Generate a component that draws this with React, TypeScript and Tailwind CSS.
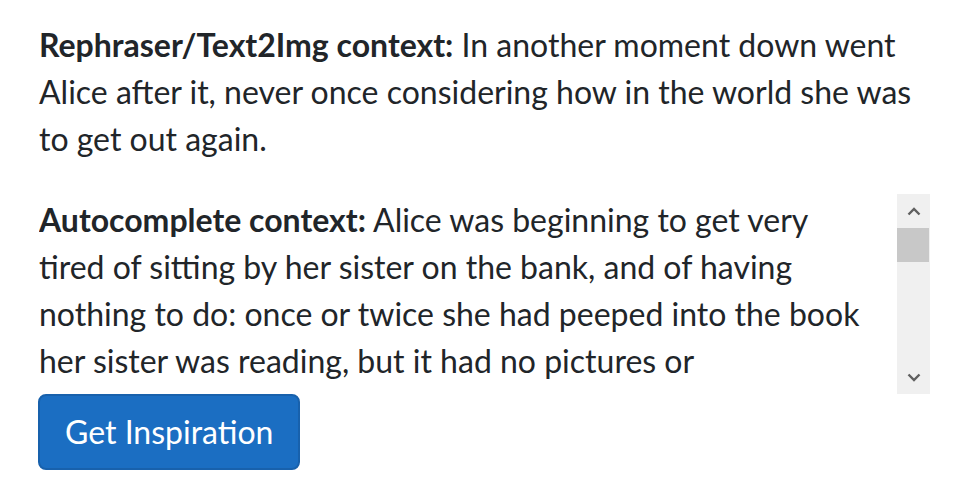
export default function App() {
  return (
    <div className="pl-[39px] pr-[24px] pt-[21px] text-[32px] leading-[47px] text-[#212529] font-['Lato','Liberation_Sans',sans-serif]">
      <p className="mb-[32px]">
        <b>Rephraser/Text2Img context:</b> In another moment down went
        <br />
        Alice after it, never once considering how in the world she was
        <br />
        to get out again.
      </p>

      <div className="flex h-[200px]">
        <div className="flex-1 overflow-hidden pt-[2px] whitespace-nowrap">
          <b>Autocomplete context:</b> Alice was beginning to get very
          <br />
          tired of sitting by her sister on the bank, and of having
          <br />
          nothing to do: once or twice she had peeped into the book
          <br />
          her sister was reading, but it had no pictures or
        </div>

        {/* fake scrollbar */}
        <div className="w-[33px] bg-[#f0f0f0] flex flex-col">
          <div className="h-[34px] flex items-center justify-center">
            <svg width="14" height="9" viewBox="0 0 14 9">
              <path d="M1.5 7.5 L7 2 L12.5 7.5" fill="none" stroke="#606060" strokeWidth="2.4" />
            </svg>
          </div>
          <div className="h-[34px] bg-[#c8c8c8] mr-[1px]" />
          <div className="flex-1" />
          <div className="h-[34px] flex items-center justify-center">
            <svg width="14" height="9" viewBox="0 0 14 9">
              <path d="M1.5 1.5 L7 7 L12.5 1.5" fill="none" stroke="#606060" strokeWidth="2.4" />
            </svg>
          </div>
        </div>
      </div>

      <div className="flex">
        <button className="px-[25px] py-[13px] text-white bg-[#1b6ec2] border-2 border-[#1861ac] rounded-[8px] leading-[46px] -ml-[1px]">
          Get Inspiration
        </button>
      </div>
    </div>
  )
}
